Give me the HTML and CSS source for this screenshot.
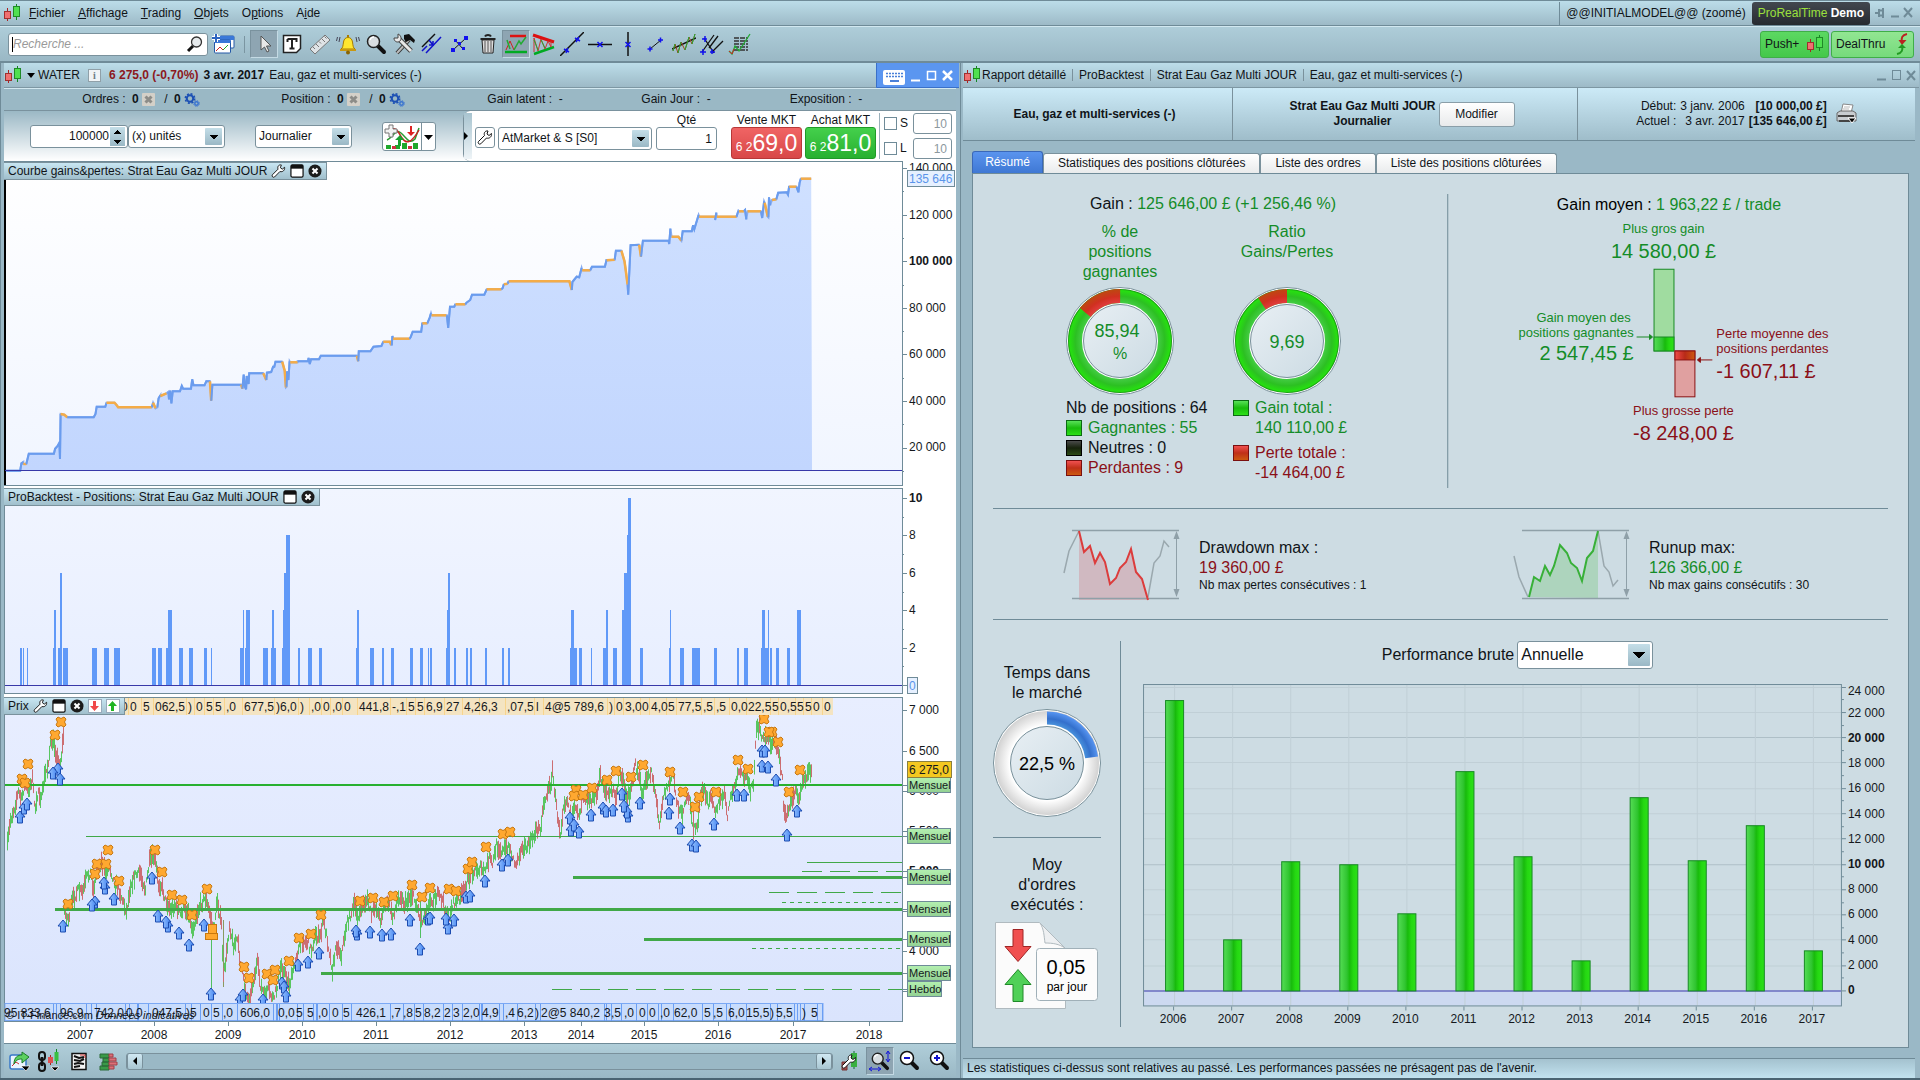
FILE: index.html
```html
<!DOCTYPE html>
<html lang="fr">
<head>
<meta charset="utf-8">
<title>ProRealTime</title>
<link rel="stylesheet" href="styles.css">
</head>
<body>
<svg width="0" height="0" class="defs" aria-hidden="true">
  <defs>
    <linearGradient id="gBar" x1="0" x2="1" y1="0" y2="0"><stop offset="0" stop-color="#55dd55"/><stop offset=".4" stop-color="#30c530"/><stop offset=".55" stop-color="#18bb0c"/><stop offset=".75" stop-color="#25d812"/><stop offset="1" stop-color="#2ce018"/></linearGradient>
    <linearGradient id="gRed" x1="0" x2="1" y1="0" y2="0"><stop offset="0" stop-color="#f04a4a"/><stop offset=".5" stop-color="#b82a18"/><stop offset="1" stop-color="#cc5a10"/></linearGradient>
    <linearGradient id="gPlot1" x1="0" x2="0" y1="0" y2="1"><stop offset="0" stop-color="#ffffff"/><stop offset="1" stop-color="#f0f5ff"/></linearGradient>
    <linearGradient id="gPlot2" x1="0" x2="0" y1="0" y2="1"><stop offset="0" stop-color="#f1f5ff"/><stop offset="1" stop-color="#e7eeff"/></linearGradient>
    <linearGradient id="gPlot3" x1="0" x2="0" y1="0" y2="1"><stop offset="0" stop-color="#e8eeff"/><stop offset="1" stop-color="#dae4fd"/></linearGradient>
    <linearGradient id="gArea" x1="0" x2="0" y1="0" y2="1"><stop offset="0" stop-color="#cfe0ff"/><stop offset="1" stop-color="#c2d6fe"/></linearGradient>
    <linearGradient id="gArrow" x1="0" x2="1" y1="0" y2="0"><stop offset="0" stop-color="#9cc8ff"/><stop offset="1" stop-color="#3f80f0"/></linearGradient>
    <linearGradient id="gTag" x1="0" x2="0" y1="0" y2="1"><stop offset="0" stop-color="#b4f0b0"/><stop offset="1" stop-color="#92d092"/></linearGradient>
    <radialGradient id="rGreen" gradientUnits="userSpaceOnUse" cx="54" cy="54" r="52"><stop offset=".73" stop-color="#44cc44"/><stop offset=".86" stop-color="#2cc022"/><stop offset=".97" stop-color="#26e010"/><stop offset="1" stop-color="#138a10"/></radialGradient>
    <radialGradient id="rRed" gradientUnits="userSpaceOnUse" cx="54" cy="54" r="52"><stop offset=".74" stop-color="#e03c3c"/><stop offset=".86" stop-color="#d03020"/><stop offset="1" stop-color="#bc4a10"/></radialGradient>
    <radialGradient id="rBlue" gradientUnits="userSpaceOnUse" cx="54" cy="54" r="52"><stop offset=".73" stop-color="#4a94dc"/><stop offset=".85" stop-color="#3470cc"/><stop offset="1" stop-color="#5a98f4"/></radialGradient>
    <radialGradient id="rWhite" gradientUnits="userSpaceOnUse" cx="54" cy="54" r="52"><stop offset=".72" stop-color="#ffffff"/><stop offset="1" stop-color="#d2d2d2"/></radialGradient>
    <linearGradient id="gHole" x1="0" x2="1" y1="0" y2="1"><stop offset="0" stop-color="#e8eff4"/><stop offset="1" stop-color="#ccdbe3"/></linearGradient>
    <symbol id="candles" viewBox="0 0 18 18"><path d="M4.500 4v13" stroke="#a22"/><rect x="1.500" y="7.500" width="6" height="7" fill="#f07070" stroke="#a03030"/><path d="M13.500 0v16" stroke="#182"/><rect x="10.500" y="2.500" width="6" height="10" fill="#50e050" stroke="#208a28"/></symbol>
    <symbol id="wrench" viewBox="0 0 16 16"><path d="M14.500 3.500l-2.500 2-2-1.500 1-3c-2.500-.5-4.500 1.500-3.500 4.500L1.500 11.500c-1.200 1.500.8 3.500 2.300 2.300L9.500 8c3 1 5.500-1.500 5-4.500z" fill="#fff" stroke="#111"/></symbol>
    <symbol id="winbox" viewBox="0 0 15 15"><rect x="1" y="1" width="13" height="13" rx="1.500" fill="#fff" stroke="#111" stroke-width="1.300"/><path d="M1 1h13v4H1z" fill="#111"/></symbol>
    <symbol id="closeball" viewBox="0 0 15 15"><circle cx="7.500" cy="7.500" r="7" fill="#1c1c1c"/><path d="M4.800 4.800l5.400 5.400M10.200 4.800l-5.400 5.400" stroke="#fff" stroke-width="2.200"/></symbol>
    <symbol id="delbox" viewBox="0 0 13 13"><rect width="13" height="13" rx="1" fill="#d4d0c8"/><path d="M3.500 3.500l6 6M9.500 3.500l-6 6" stroke="#8c8c88" stroke-width="3"/></symbol>
    <symbol id="gears" viewBox="0 0 16 14"><circle cx="6" cy="5.500" r="3.200" fill="none" stroke="#1c50b4" stroke-width="2"/><circle cx="6" cy="5.500" r="4.700" fill="none" stroke="#1c50b4" stroke-width="1.500" stroke-dasharray="2 1.690"/><circle cx="12.500" cy="10.500" r="1.700" fill="none" stroke="#3a74d0" stroke-width="1.500"/><circle cx="12.500" cy="10.500" r="2.800" fill="none" stroke="#3a74d0" stroke-dasharray="1.300 .9"/></symbol>
    <symbol id="lens" viewBox="0 0 22 22"><path d="M13 13l6 6" stroke="#111" stroke-width="4" stroke-linecap="round"/><circle cx="8.500" cy="8.500" r="6" fill="#d8dde0" stroke="#222" stroke-width="1.500"/><path d="M5 7a4 4 0 0 1 4-3" stroke="#fff" stroke-width="1.500" fill="none"/></symbol>
  </defs>
</svg>

<header class="menubar">
  <svg class="i18"><use href="#candles"/></svg>
  <nav class="menus">
    <a href="#"><u>F</u>ichier</a><a href="#"><u>A</u>ffichage</a><a href="#"><u>T</u>rading</a><a href="#"><u>O</u>bjets</a><a href="#">O<u>p</u>tions</a><a href="#">A<u>i</u>de</a>
  </nav>
  <span class="model">@@INITIALMODEL@@ (zoomé)</span>
  <span class="brand"><em>ProRealTime</em> <b>Demo</b></span>
  <svg class="wctl" width="46" height="18" fill="none" stroke="#6f8b98"><path d="M5 9h4M9 5v8M9 6.500h4v5H9M13 4v10" stroke-width="2"/><path d="M21 12.500h8M34 4l8 9M42 4l-8 9" stroke-width="2"/></svg>
</header>

<div class="toolbar">
  <label class="search"><input type="text" placeholder="Recherche ..." aria-label="Recherche"><svg width="18" height="18"><path d="M7 11L2 16" stroke="#111" stroke-width="3"/><circle cx="10.500" cy="7" r="5" fill="#e6eaec" stroke="#333" stroke-width="1.300"/></svg></label>
  <button class="plain" aria-label="Nouvelle fenêtre"><svg width="24" height="22"><rect x="9" y="3" width="14" height="12" rx="1" fill="#fff" stroke="#2458a8"/><path d="M9 3h14v4H9z" fill="#3a78d8"/><rect x="3.500" y="7" width="16" height="13" rx="1" fill="#fff" stroke="#2458a8"/><path d="M3.500 7h16v3h-16z" fill="#3a78d8"/><path d="M5 18l4-4 3 3" stroke="#c22" fill="none"/><path d="M12 17l5-5" stroke="#2a2" fill="none"/><path d="M5 1v8M1 5h8" stroke="#fff" stroke-width="4"/><path d="M5 1v8M1 5h8" stroke="#2c64c0" stroke-width="2"/></svg></button>
  <div class="tools">
    <button class="on" aria-label="Curseur"><svg width="24" height="24"><path d="M9 4v14l3.500-3 2.500 5 2-1-2.500-5H19z" fill="#e8e8e8" stroke="#555"/></svg></button>
    <button aria-label="Texte"><svg width="24" height="24"><path d="M3.500 3.500h17v13l-4 4h-13z" fill="#fff" stroke="#222" stroke-width="1.500"/><path d="M7.500 7h9v3M7.500 7v3M12 7v9M9.500 16.500h5" stroke="#222" stroke-width="2" fill="none"/></svg></button>
    <button aria-label="Règle"><svg width="24" height="24"><path d="M2 17L17 3l5 5L7 22z" fill="#dfe3e6" stroke="#777"/><path d="M5 15l2 2M8 12l3 3M11 9.500l2 2M14 7l3 3M16.500 4.500l2 2" stroke="#777"/></svg></button>
    <button aria-label="Alerte"><svg width="24" height="24"><path d="M5 17c2-1 2-4 2.500-7 .5-3 2-4.500 4.500-4.500s4 1.500 4.500 4.500 .5 6 2.500 7z" fill="#ffe630" stroke="#a87c00"/><path d="M4 18h16" stroke="#c89810" stroke-width="2"/><circle cx="12" cy="20.500" r="2" fill="#8a6400"/><path d="M12 3v2" stroke="#a87c00" stroke-width="2"/><path d="M4 5L3 10M1.500 5l-1 4M20 5l1 5M22.500 5l1 4" stroke="#445"/></svg></button>
    <button aria-label="Loupe"><svg width="24" height="24"><use href="#lens" x="1" y="1" width="22" height="22"/></svg></button>
    <button aria-label="Outils"><svg width="24" height="24"><path d="M5 21L17 8" stroke="#333" stroke-width="4"/><path d="M5 21L17 8" stroke="#bbb" stroke-width="2"/><path d="M12 3l5-1 6 6-1 3-4-3-4 2-2-3z" fill="#111"/><path d="M7 7l12 12" stroke="#444" stroke-width="5"/><path d="M6 6l13 13" stroke="#e8e8e8" stroke-width="3"/><path d="M2 6c0 4 4 5 6 3s1-6-2-7v4H2z" fill="#e8e8e8" stroke="#444"/></svg></button>
    <button aria-label="Canal"><svg width="24" height="24"><path d="M2 15L15 2" stroke="#111" stroke-width="1.500"/><path d="M6 21L21 5M2 19l5-5" stroke="#11c" stroke-width="1.500"/><path d="M9 8l4 5m0-4v4h-4" stroke="#11c" fill="none" stroke-width="1.500"/></svg></button>
    <button aria-label="Segment"><svg width="24" height="24"><path d="M5 18L18 6M7 8l8 9" stroke="#111"/><path d="M3 16h4v4H3zM16 4h4v4h-4zM6 7h3v3H6zM14 15h3v3h-3zM10 10h3v3h-3z" fill="#11e"/></svg></button>
    <button aria-label="Supprimer"><svg width="24" height="24"><path d="M6 8h12l-1 13H7z" fill="#ddd" stroke="#222"/><path d="M9 9v11M12 9v11M15 9v11" stroke="#555"/><path d="M4.500 7h15M9 4.500c1-2 5-2 6 0" stroke="#222" stroke-width="2" fill="none"/></svg></button>
    <button class="on" aria-label="Support et résistance"><svg width="24" height="24"><path d="M6 4h16" stroke="#d11" stroke-width="2.500"/><path d="M1 20h22" stroke="#0a2" stroke-width="2.500"/><path d="M2 18l4-9 4 9" stroke="#c22" fill="none"/><path d="M3 8l3 9M10 18l5-9 2 3 5-7" stroke="#2a3" stroke-width="1.500" fill="none"/></svg></button>
    <button aria-label="Triangle"><svg width="24" height="24"><path d="M1 3l21 7" stroke="#d11" stroke-width="3"/><path d="M2 22l20-7" stroke="#0a2" stroke-width="2.500"/><path d="M2 20V6l4 13 3-12 4 10 3-8 3 6V9" stroke="#c33" fill="none"/><path d="M2 8l4 10M9 8l4 8" stroke="#2a3" fill="none"/></svg></button>
    <button aria-label="Droite"><svg width="24" height="24"><path d="M0 24L24 0" stroke="#111" stroke-width="1.500"/><path d="M4 17l5 3M8 16l-2 5M15 6l5 3M19 5l-3 5" stroke="#11e" stroke-width="1.500"/></svg></button>
    <button aria-label="Horizontale"><svg width="24" height="24"><path d="M0 12.500h24" stroke="#111" stroke-width="1.500"/><path d="M9.500 10l5 5M14.500 10l-5 5" stroke="#11e" stroke-width="1.500"/></svg></button>
    <button aria-label="Verticale"><svg width="24" height="24"><path d="M12 0v24" stroke="#111" stroke-width="1.500"/><path d="M9.500 10l5 5M14.500 10l-5 5" stroke="#11e" stroke-width="1.500"/></svg></button>
    <button aria-label="Segment simple"><svg width="24" height="24"><path d="M6 17L17 8" stroke="#111"/><path d="M3.500 17h5M6 14.500v5M14 8h5M16.500 5.500v5" stroke="#11e" stroke-width="1.500"/></svg></button>
    <button aria-label="Régression"><svg width="24" height="24"><path d="M0 17L24 6" stroke="#111" stroke-width="1.500"/><path d="M1 19l2-7 3 9 3-11 4 8 4-13 3 7 3-10" stroke="#994818" fill="none"/><path d="M1 19l2-7M6 21l3-11M13 18l4-13M20 12l3-10" stroke="#2a3"/></svg></button>
    <button aria-label="Fourchette"><svg width="24" height="24"><path d="M2 20L14 3M9 16l9-12M12 20L23 9M4 6l10 15" stroke="#111" stroke-width="1.300"/><path d="M0 20h6M3 17v6M2 7h5M5 4v6M10 20h5M12 17v5" stroke="#11e" stroke-width="1.500"/></svg></button>
    <button aria-label="Fibonacci"><svg width="24" height="24"><path d="M6 6h14M6 9h14M6 12h14M6 15h14M6 18h14" stroke="#333" stroke-dasharray="5 1" stroke-width="1.600"/><path d="M1 19l3 3 3-8 4 5L22 2" stroke="#2a3" stroke-width="1.300" fill="none"/><path d="M1 19l3 3 2-5" stroke="#c22" fill="none"/></svg></button>
  </div>
  <button class="push">Push+ <svg class="i18"><use href="#candles"/></svg></button>
  <button class="deal">DealThru <svg width="14" height="22"><path d="M12 1C7 2 6 5 7 9" stroke="#b22" stroke-width="2" fill="none"/><path d="M3.500 7h8L7 12z" fill="#b22"/><path d="M2 21c5-1 6-4 5-8" stroke="#292" stroke-width="2" fill="none"/><path d="M3 15h8l-4-4z" fill="#292"/></svg></button>
</div>

<main class="desk">
  <section class="win">
    <div class="title">
      <svg class="i18"><use href="#candles"/></svg><i class="tri"></i>
      <span>WATER</span><span class="info">i</span>
      <b class="loss">6 275,0 (-0,70%)</b><b>3 avr. 2017</b><span>Eau, gaz et multi-services (-)</span>
      <svg class="kbd" width="83" height="25"><path d="M0 0h83v25H0z" fill="#5b96f0"/><path d="M.5 0v24.500H83" stroke="#3a70c8" fill="none"/><rect x="7" y="7" width="22" height="15" rx="2" fill="#fff"/><path d="M10 10.500h17M10 13.500h17" stroke="#4a80d8" stroke-width="1.500" stroke-dasharray="2 1"/><path d="M14 18h9" stroke="#4a80d8" stroke-width="2"/><path d="M35 17.500h9" stroke="#fff" stroke-width="2"/><rect x="51.500" y="8.500" width="8" height="8" fill="none" stroke="#fff" stroke-width="1.500"/><path d="M67 8l9 9M76 8l-9 9" stroke="#fff" stroke-width="2.500"/></svg>
    </div>
    <div class="orders">
      <span>Ordres : <b>0</b> <svg width="13" height="13"><use href="#delbox"/></svg> &nbsp;/ <b>0</b><svg width="16" height="14"><use href="#gears"/></svg></span>
      <span>Position : <b>0</b> <svg width="13" height="13"><use href="#delbox"/></svg> &nbsp;/ <b>0</b><svg width="16" height="14"><use href="#gears"/></svg></span>
      <span>Gain latent :&nbsp; -</span><span>Gain Jour :&nbsp; -</span><span>Exposition :&nbsp; -</span>
    </div>
    <div class="trade">
      <div class="setup">
        <label class="field qty"><input type="text" value="100000" aria-label="Quantité d'unités"><i class="spin"></i></label>
        <label class="field drop units"><select aria-label="Unités"><option>(x) unités</option></select></label>
        <label class="field drop period"><select aria-label="Période"><option>Journalier</option></select></label>
        <button class="indic" aria-label="Indicateurs"><svg width="52" height="27"><path d="M38.500 0v27" stroke="#7a919c"/><path d="M4 17c6-2 8-12 14-7s8 12 14 6l4-11" stroke="#2a9a30" stroke-width="1.500" fill="none"/><path d="M6 7c8-4 9 2 13 8s9 6 17-8" stroke="#c22" stroke-width="1.500" fill="none"/><path d="M3 26v-4h5v4zM12 26v-4h5v4zM19 26v-6h5v6zM30 26v-6h5v6z" fill="#1ea82c"/><path d="M9 26v-3h4v3zM25 26v-3h4v3z" fill="#d03040"/><path d="M15 23v-6h-3l5-5 4 5h-3v6z" fill="#19a030"/><path d="M27 3v6h-3l4 4 4-4h-3V3z" fill="#d22"/><path d="M6 2h4v4h4v4h-4v4H6v-4H2V6h4z" fill="#f2f2f2" stroke="#777"/><path d="M41 12h9l-4.500 5z" fill="#000"/></svg></button>
      </div>
      <div class="deskpanel">
        <i class="expand"></i>
        <button class="tool" aria-label="Réglages"><svg width="16" height="16"><use href="#wrench"/></svg></button>
        <label class="field drop market"><select aria-label="Type d'ordre"><option>AtMarket &amp; S [S0]</option></select></label>
        <label class="col">Qté<input class="field one" type="text" value="1"></label>
        <div class="col"><span>Vente MKT</span><button class="px sell"><small>6 2</small>69,0</button></div>
        <div class="col"><span>Achat MKT</span><button class="px buy"><small>6 2</small>81,0</button></div>
        <div class="sl">
          <label><input type="checkbox"><span>S</span></label><input class="field ten" type="text" value="10" aria-label="Stop">
          <label><input type="checkbox"><span>L</span></label><input class="field ten" type="text" value="10" aria-label="Limite">
        </div>
      </div>
    </div>
    <div class="charts">
      <div class="chart"><h2>Courbe gains&amp;pertes: Strat Eau Gaz Multi JOUR <svg width="15" height="15"><use href="#wrench"/></svg><svg width="14" height="14"><use href="#winbox"/></svg><svg width="14" height="14"><use href="#closeball"/></svg></h2><svg id="equity" viewBox="4 161 952 326"></svg></div>
      <div class="chart"><h2>ProBacktest - Positions: Strat Eau Gaz Multi JOUR <svg width="14" height="14"><use href="#winbox"/></svg><svg width="14" height="14"><use href="#closeball"/></svg></h2><svg id="positions" viewBox="4 487 952 209"></svg></div>
      <div class="chart"><h2>Prix <svg width="15" height="15"><use href="#wrench"/></svg><svg width="14" height="14"><use href="#winbox"/></svg><svg width="14" height="14"><use href="#closeball"/></svg><svg width="14" height="14"><rect x=".5" y=".5" width="13" height="13" fill="#fff" stroke="#9ab"/><path d="M5 2h3v5h3l-4.500 5L2 7h3z" fill="#f04848"/></svg><svg width="14" height="14"><rect x=".5" y=".5" width="13" height="13" fill="#fff" stroke="#9ab"/><path d="M5 12h3V7h3L6.500 2 2 7h3z" fill="#22b422"/></svg></h2><svg id="price" viewBox="4 696 952 347"></svg></div>
    </div>
    <div class="bottom">
      <button aria-label="Exporter"><svg width="22" height="22"><rect x="2" y="5" width="16" height="14" rx="2" fill="#eaf4ff" stroke="#3878c8" stroke-width="1.500"/><path d="M4 16l4-4 3 2" stroke="#c33" fill="none"/><path d="M6 14c0-7 4-9 8-9V2l7 5-7 6V9c-4 0-6 1-8 5z" fill="#5cd060" stroke="#1c7c28"/><path d="M13 16h9l-4 5z" fill="#000" stroke="#fff" stroke-width=".7"/></svg></button>
      <button aria-label="Lier"><svg width="26" height="24"><rect x="3" y="3" width="6" height="8" rx="3" fill="none" stroke="#111" stroke-width="2"/><rect x="3" y="14" width="6" height="8" rx="3" fill="none" stroke="#111" stroke-width="2"/><path d="M6 8v9" stroke="#111" stroke-width="2.500"/><path d="M14.500 6v10" stroke="#a22"/><path d="M12 8h5v6h-5z" fill="#e05050"/><path d="M20.500 0v15" stroke="#182"/><path d="M18.500 3h4v9h-4z" fill="#38c040"/><path d="M15 18h8l-4 4z" fill="#000" stroke="#fff" stroke-width=".7"/></svg></button>
      <button aria-label="Liste"><svg width="22" height="22"><rect x="4" y="3.500" width="14" height="16" fill="#f4f4f4" stroke="#111" stroke-width="1.500"/><path d="M6 6l5 2 5-1M6 10l6 1 4-2M6 14l4-1 6 1M6 17l6-1" stroke="#111" stroke-width="2" fill="none"/><path d="M12 5h5v3" stroke="#c33" fill="none"/></svg></button>
      <button aria-label="Carnet"><svg width="22" height="22"><path d="M2 4h9v4H2zM5 8h6v4H5zM4 12h7v4H4zM2 16h9v4H2z" fill="#3a9a48" stroke="#2a6a38"/><path d="M11 4h4v3h-4zM11 8h7v3h-7zM11 12h8v3h-8zM11 16h5v3h-5z" fill="#dc7078" stroke="#a04048"/></svg></button>
      <div class="scroll"><button aria-label="Gauche"><svg width="6" height="8"><path d="M5 0v8L1 4z"/></svg></button><i></i><button aria-label="Droite"><svg width="6" height="8"><path d="M1 0v8l4-4z"/></svg></button></div>
      <button aria-label="Réglages du graphique"><svg width="22" height="24"><path d="M3 13h5v8H3z" fill="#a04a48" stroke="#733"/><path d="M15 2v18" stroke="#163"/><path d="M12 4h6v14h-6z" fill="#38b040"/><use href="#wrench" x="2" y="5" width="16" height="16"/></svg></button>
      <button class="on" aria-label="Zoom libre"><svg width="24" height="24"><use href="#lens" x="2" y="2" width="20" height="20"/><path d="M20 3v9M18 5l2-3 2 3M18 10l2 3 2-3M2 20h10M4 18l-3 2 3 2M10 18l3 2-3 2" stroke="#11d" fill="none"/></svg></button>
      <button aria-label="Zoom arrière"><svg width="24" height="24"><path d="M13 13l6 6" stroke="#111" stroke-width="4" stroke-linecap="round"/><circle cx="9" cy="9" r="6.500" fill="#fff" stroke="#111" stroke-width="1.500"/><path d="M6 9h6" stroke="#11c" stroke-width="2"/></svg></button>
      <button aria-label="Zoom avant"><svg width="24" height="24"><path d="M13 13l6 6" stroke="#111" stroke-width="4" stroke-linecap="round"/><circle cx="9" cy="9" r="6.500" fill="#fff" stroke="#111" stroke-width="1.500"/><path d="M6 9h6M9 6v6" stroke="#11c" stroke-width="2"/></svg></button>
    </div>
  </section>

  <section class="win report">
    <div class="title">
      <svg class="i18"><use href="#candles"/></svg>
      <span class="crumb">Rapport détaillé</span><span class="crumb">ProBacktest</span><span class="crumb">Strat Eau Gaz Multi JOUR</span><span class="crumb">Eau, gaz et multi-services (-)</span>
      <svg class="wctl" width="46" height="18" fill="none" stroke="#6f8b98"><path d="M1 13.500h9" stroke-width="2"/><rect x="16.500" y="4.500" width="8" height="9"/><path d="M31 5l8 9M39 5l-8 9" stroke-width="2"/></svg>
    </div>
    <div class="head">
      <div><b>Eau, gaz et multi-services (-)</b></div>
      <div><b>Strat Eau Gaz Multi JOUR<br>Journalier</b><button class="modify">Modifier</button></div>
      <div><table><tr><td>Début:</td><td>3 janv. 2006</td><td><b>[10 000,00 £]</b></td></tr><tr><td>Actuel :</td><td>3 avr. 2017</td><td><b>[135 646,00 £]</b></td></tr></table>
        <button class="plain" aria-label="Imprimer"><svg width="22" height="22"><path d="M7 1l10 1-2 8H5z" fill="#fff" stroke="#888"/><path d="M8 4h6M7 6h6" stroke="#bbb"/><path d="M1 10l3-2h13l3 2v8H1z" fill="#c8ccd0" stroke="#666"/><path d="M2 13h16M3 18h14" stroke="#444" stroke-width="2"/><path d="M12 15h8l-4 5z" fill="#000" stroke="#fff"/></svg></button></div>
    </div>
    <div class="tabs"><button class="sel">Résumé</button><button>Statistiques des positions clôturées</button><button>Liste des ordres</button><button>Liste des positions clôturées</button></div>
    <div class="panel">
      <div class="row gains">
        <div class="left">
          <h3>Gain : <span class="g">125 646,00 £ (+1 256,46 %)</span></h3>
          <div class="pair">
            <div>
              <p class="cap g">% de<br>positions<br>gagnantes</p>
              <svg class="donut" viewBox="0 0 108 108"><circle cx="54" cy="54" r="53.500" fill="#fff" stroke="#78909a"/><circle cx="54" cy="54" r="45" fill="none" stroke="url(#rGreen)" stroke-width="14"/><circle cx="54" cy="54" r="45" fill="none" stroke="url(#rRed)" stroke-width="14" pathLength="1000" stroke-dasharray="141 859" transform="rotate(219.400 54 54)"/><circle cx="54" cy="54" r="36.500" fill="url(#gHole)" stroke="#78909a"/><text x="51" y="50" class="t18 g">85,94</text><text x="54" y="72" class="t16 g">%</text></svg>
              <ul><li>Nb de positions : 64</li><li class="g"><i class="sw sg"></i>Gagnantes : 55</li><li><i class="sw sk"></i>Neutres : 0</li><li class="r"><i class="sw sr"></i>Perdantes : 9</li></ul>
            </div>
            <div>
              <p class="cap g">Ratio<br>Gains/Pertes</p>
              <svg class="donut" viewBox="0 0 108 108"><circle cx="54" cy="54" r="53.500" fill="#fff" stroke="#78909a"/><circle cx="54" cy="54" r="45" fill="none" stroke="url(#rGreen)" stroke-width="14"/><circle cx="54" cy="54" r="45" fill="none" stroke="url(#rRed)" stroke-width="14" pathLength="1000" stroke-dasharray="94 906" transform="rotate(236.200 54 54)"/><circle cx="54" cy="54" r="36.500" fill="url(#gHole)" stroke="#78909a"/><text x="54" y="61" class="t18 g">9,69</text></svg>
              <ul class="totals"><li class="g"><i class="sw sg"></i><span>Gain total :<br>140 110,00 £</span></li><li class="r"><i class="sw sr"></i><span>Perte totale :<br>-14 464,00 £</span></li></ul>
            </div>
          </div>
        </div>
        <svg class="avg" viewBox="1446 193 441 295">
          <path d="M1446.500 193v295" stroke="#6f8b98"/>
          <text x="1556" y="209" class="t16s">Gain moyen : <tspan class="g">1 963,22 £ / trade</tspan></text>
          <text x="1663" y="232" class="t13 g">Plus gros gain</text><text x="1663" y="257" class="t20 g">14 580,00 £</text>
          <g stroke="#188a24"><rect x="1653.500" y="268.500" width="20" height="82" fill="#a0dca0"/><rect x="1653.500" y="336.500" width="20" height="14" fill="url(#gBar)"/><path d="M1636 336.500h14" fill="none"/><path d="M1649 334v5l3-2.500z" fill="#188a24"/></g>
          <g stroke="#8a1010"><rect x="1674.500" y="350.500" width="20" height="46" fill="#e0a0a0"/><rect x="1674.500" y="350.500" width="20" height="9" fill="url(#gRed)"/><path d="M1698 359.500h14" fill="none"/><path d="M1700 357v5l-3-2.500z" fill="#8a1010"/></g>
          <text x="1630" y="321" class="t13 g end">Gain moyen des</text><text x="1633" y="336" class="t13 g end">positions gagnantes</text><text x="1633" y="360" class="t20 g end">2 547,45 £</text>
          <text x="1716" y="338" class="t13 r st">Perte moyenne des</text><text x="1716" y="353" class="t13 r st">positions perdantes</text><text x="1716" y="378" class="t20 r st">-1 607,11 £</text>
          <text x="1683" y="415" class="t13 r">Plus grosse perte</text><text x="1683" y="440" class="t20 r">-8 248,00 £</text>
        </svg>
      </div>
      <div class="row extremes">
        <div><svg width="118" height="73"><path d="M16 3l5 21 6-6 5 17 5-10 5 9 5 22 6-6 4-10 6-6 5-13 5 23 6 7 6 21H16z" fill="#d87078" opacity=".32"/><path d="M9 2.500h107M9 70.500h107" stroke="#8fa0a8" stroke-width="1.500"/><path d="M1 45l5-22L16 3M85 69l6-34 6-7 4-15 5 6" stroke="#9aa8ae" stroke-width="1.500" fill="none"/><path d="M16 3l5 21 6-6 5 17 5-10 5 9 5 22 6-6 4-10 6-6 5-13 5 23 6 7 6 21" stroke="#dc3c3c" stroke-width="2" fill="none"/><path d="M113.500 4v64" stroke="#8fa0a8"/><path d="M113.500 3l3 8h-6zM113.500 69l3-8h-6z" fill="#8fa0a8"/></svg>
          <p>Drawdown max :<br><span class="r">19 360,00 £</span><small>Nb max pertes consécutives : 1</small></p></div>
        <div><svg width="118" height="73"><path d="M16 69l5-20 6 4 5-15 5 9 4-9 6-21 7 8 4 10 6 5 5 13 5-23 6-7 5-20v67z" fill="#78c880" opacity=".38"/><path d="M9 2.500h107M9 70.500h107" stroke="#8fa0a8" stroke-width="1.500"/><path d="M1 28l5 21 9 20M85 3l6 35 5 6 4 14 5-6" stroke="#9aa8ae" stroke-width="1.500" fill="none"/><path d="M16 69l5-20 6 4 5-15 5 9 4-9 6-21 7 8 4 10 6 5 5 13 5-23 6-7 5-20" stroke="#38b038" stroke-width="2" fill="none"/><path d="M113.500 4v64" stroke="#8fa0a8"/><path d="M113.500 3l3 8h-6zM113.500 69l3-8h-6z" fill="#8fa0a8"/></svg>
          <p>Runup max:<br><span class="g">126 366,00 £</span><small>Nb max gains consécutifs : 30</small></p></div>
      </div>
      <div class="row perf">
        <div class="side">
          <p>Temps dans<br>le marché</p>
          <svg class="donut" viewBox="0 0 108 108"><circle cx="54" cy="54" r="53.500" fill="#fff" stroke="#78909a"/><circle cx="54" cy="54" r="45" fill="none" stroke="url(#rWhite)" stroke-width="14"/><circle cx="54" cy="54" r="45" fill="none" stroke="url(#rBlue)" stroke-width="13" pathLength="1000" stroke-dasharray="230 770" transform="rotate(-90 54 54)"/><circle cx="54" cy="54" r="36.500" fill="url(#gHole)" stroke="#78909a"/><text x="54" y="61" class="t18">22,5 %</text></svg>
          <hr>
          <p>Moy<br>d'ordres<br>exécutés :</p>
          <svg viewBox="0 0 108 90" class="orderpic"><path d="M2.500 1.500h44l26 26v60h-70z" fill="#fbfbfb" stroke="#b0babf"/><path d="M47 2c4 6 4 13 5 20 8 0 14 1 20 5z" fill="#eef0f2" stroke="#b0babf"/><path d="M20 8.500h10v17h8l-13 15-13-15h8z" fill="#f05050" stroke="#a02424"/><path d="M20 80.500h10v-17h8l-13-15-13 15h8z" fill="#50d058" stroke="#208a28"/><rect x="43.500" y="27.500" width="61" height="52" rx="3" fill="#fcfcfc" stroke="#a0b0b8"/><text x="73" y="53" class="t20">0,05</text><text x="74" y="70" class="t12">par jour</text></svg>
        </div>
        <div class="plot">
          <div class="pick"><label for="pb">Performance brute</label><span class="field drop big"><select id="pb"><option>Annuelle</option></select></span></div>
          <svg id="perf" viewBox="1121 669 766 357"></svg>
        </div>
      </div>
    </div>
    <footer>Les statistiques ci-dessus sont relatives au passé. Les performances passées ne présagent pas de l'avenir.</footer>
  </section>
</main>
<script src="charts.js"></script>
</body>
</html>
```
FILE: styles.css
```css
* { box-sizing: border-box; }
body { margin: 0; min-height: 100vh; display: flex; flex-direction: column; font: 12px/15px "Liberation Sans", Arial, sans-serif; color: #101418; background: #9ab8c6; }
.defs { position: absolute; }
button, input, select { font: inherit; color: inherit; margin: 0; }
button { cursor: pointer; }
h2, h3, p, ul { margin: 0; padding: 0; font-weight: normal; }
svg { display: block; flex: none; }
small { font-size: 12px; }
.i18 { width: 18px; height: 18px; }
.g { color: #148c28; fill: #148c28; }
.r { color: #8a1018; fill: #8a1018; }

.menubar { display: flex; align-items: center; height: 26px; padding: 0 4px 0 3px; border-top: 1px solid #6f8b98; border-bottom: 1px solid #6f8b98; background: linear-gradient(#bcdde9, #9dbac7); }
.menus { display: flex; gap: 13px; margin-left: 8px; flex: 1; }
.menus a { color: inherit; text-decoration: none; }
.model { border-left: 1px solid #6f8b98; padding: 4px 6px; }
.brand { background: linear-gradient(#42474f, #262a30); color: #fff; border-radius: 3px; padding: 4px 6px; }
.brand em { font-style: normal; color: #9be03c; }

.toolbar { display: flex; align-items: center; height: 37px; padding: 0 6px 0 8px; border-top: 1px solid #d2e8f0; border-bottom: 2px solid #6f8b98; background: linear-gradient(#aecdd9, #9ab8c5); }
.search { display: flex; align-items: center; width: 200px; height: 23px; background: #fff; border: 1px solid #7a919c; border-radius: 3px; padding: 0 3px; }
.search input { flex: 1; min-width: 0; border: 0; outline: 0; padding: 0; background: none; border-left: 1px solid #000; }
.search input::placeholder { color: #9a9a9a; font-style: italic; }
button.plain, .tools button, .bottom > button { display: grid; place-items: center; border: 1px solid transparent; background: none; padding: 0; }
.toolbar .plain { width: 28px; margin: 0 7px 0 1px; }
.tools { display: flex; flex: 1; padding-left: 6px; background: linear-gradient(#7a95a1, #7a95a1) 0 50% / 1px 17px no-repeat; }
.tools button { width: 28px; height: 28px; }
.tools .on, .bottom .on { background: #8ea5b2; border-color: #7a929e #c4dae4 #c4dae4 #7a929e; }
.push, .deal { display: flex; align-items: center; justify-content: space-between; height: 27px; padding: 0 4px; border: 1px solid #3fae48; border-radius: 3px; background: linear-gradient(#5cd862, #44c84a); }
.push { width: 69px; margin-right: 2px; }
.deal { width: 83px; background: linear-gradient(#92e692, #76da7c); }

.desk { flex: 1; display: grid; grid-template-columns: 1fr 1fr; border-bottom: 2px solid #4a6472; }
.win { display: flex; flex-direction: column; min-width: 0; padding: 0 4px 0 3px; border-left: 1px solid #6f8b98; }
.title { display: flex; align-items: center; gap: 5px; height: 25px; background: linear-gradient(#bcdde9, #9dbac7); border-bottom: 1px solid #7d97a3; }
.title .kbd, .title .wctl { margin-left: auto; margin-right: -3px; }
.tri { width: 0; border: 4px solid transparent; border-top: 5px solid #000; border-bottom: 0; margin-right: -2px; }
.info { width: 13px; height: 13px; margin: 0 3px; background: #f0f4f6; border: 1px solid #90a0a8; font: bold 10px/11px "Liberation Serif", serif; text-align: center; color: #6c7c84; }
.loss { color: #8c1820; }
.orders { display: grid; grid-template-columns: 194px 210px 154px 148px 152px; padding-left: 40px; height: 23px; align-items: center; border-top: 1px solid #d2e8f0; border-bottom: 1px solid #7a929e; background: #9ab8c5; }
.orders span { display: flex; align-items: center; justify-content: center; gap: 3px; white-space: pre; }
.trade { display: flex; height: 50px; background: linear-gradient(#9bb8c5, #fff); }
.setup { display: flex; align-items: center; flex: 1; padding-left: 26px; }
.field { display: flex; align-items: center; height: 23px; background: #fff; border: 1px solid #7a919c; border-radius: 3px; padding: 0 4px; }
.field input, .field select { flex: 1; min-width: 0; width: 100%; border: 0; outline: 0; padding: 0; background: none; appearance: none; }
.qty { width: 98px; padding-right: 2px; }
.qty input { text-align: right; }
.spin { width: 15px; height: 19px; margin-left: 1px; background: conic-gradient(from 135deg at 50% 0, #000 90deg, transparent 0) 4px 3px / 7px 4px no-repeat, conic-gradient(from -45deg at 50% 4px, #000 90deg, transparent 0) 4px 13px / 7px 4px no-repeat, linear-gradient(#c4dee8, #9ab8c5); }
.drop { padding: 0 2px 0 3px; }
.drop::after { content: ""; width: 17px; height: 17px; background: conic-gradient(from -45deg at 50% 4px, #000 90deg, transparent 0) 5px 7px / 8px 4px no-repeat, linear-gradient(#c4dee8, #9ab8c5); border-radius: 1px; pointer-events: none; }
.units { width: 97px; }
.period { width: 97px; margin-left: 30px; }
.indic { height: 29px; width: 54px; margin-left: 30px; padding: 0; border: 1px solid #7a919c; border-radius: 3px; background: #fff; }
.deskpanel { display: flex; align-items: flex-start; gap: 3px; width: 493px; height: 50px; background: #fff; border-left: 1px solid #7a919c; border-radius: 7px 0 0 7px; padding-top: 2px; }
.deskpanel > .tool, .deskpanel > .market { margin-top: 14px; }
.expand { width: 8px; height: 46px; background: linear-gradient(#a8c4d0, #eef4f7); }
.expand::after { content: ""; display: block; margin-top: 19px; border: 4px solid transparent; border-left: 4px solid #000; border-right: 0; width: 4px; }
.tool { width: 20px; height: 21px; padding: 1px; border: 1px solid #7a919c; border-radius: 3px; background: #fff; }
.market { width: 154px; }
.col { display: flex; flex-direction: column; align-items: center; line-height: 14px; }
.deskpanel label.col { margin: 0 11px 0 1px; }
.one { width: 61px; text-align: right; }
.px { display: flex; align-items: baseline; justify-content: center; width: 71px; height: 32px; border: 1px solid #b83838; border-radius: 3px; color: #fff; font-size: 23px; line-height: 30px; padding: 0; background: linear-gradient(#f06464, #d84848); }
.px small { font-size: 12px; }
.buy { border-color: #1f9a28; background: linear-gradient(#44d04c, #28b030); }
.sl { display: grid; grid-template-columns: 25px 39px; gap: 4px; border-left: 1px solid #9ab0ba; padding-left: 4px; }
.sl label { display: flex; align-items: center; gap: 3px; }
.sl input[type=checkbox] { appearance: none; flex: none; width: 13px; height: 13px; border: 1px solid #6f8b98; background: #fff; }
.ten { width: 39px; height: 21px; text-align: right; color: #8c989e; }

.charts { background: #fff; }
.chart { position: relative; }
.chart > svg { width: 100%; height: auto; overflow: hidden; }
.chart h2 { position: absolute; left: 0; top: 1px; display: flex; align-items: center; gap: 4px; height: 18px; padding: 0 4px; font-size: 12px; white-space: nowrap; border: 1px solid #7a919c; border-left: 0; background: linear-gradient(#c8e6f2, #a0bfcc); }
.tick { font-size: 12px; fill: #14181c; }
.tag { font-size: 11px; }
.blue { fill: #5a94ea; }
.b { font-weight: bold; }
.mid { text-anchor: middle; }

.bottom { display: flex; align-items: center; flex: 1; min-height: 34px; padding-left: 1px; border-top: 1px solid #6f8b98; background: linear-gradient(#b0ced9, #9ab8c5); }
.bottom > button { width: 28px; height: 28px; margin-right: 2px; }
.scroll { display: flex; flex: 1; height: 17px; margin: 0 3px 0 1px; border: 1px solid #7a919c; background: #9ab8c5; border-radius: 3px; }
.scroll i { flex: 1; }
.scroll button { display: grid; place-items: center; width: 16px; padding: 0; border: 0; border-right: 1px solid #7a919c; border-left: 1px solid #7a919c; background: linear-gradient(#d0e8f2, #a8c6d2); border-radius: 2px; }

.report { padding: 0 1px 0 2px; background: #9ab8c6; }
.report .title { gap: 0; }
.crumb { padding: 0 6px; border-right: 1px solid #7a919c; line-height: 12px; }
.crumb:nth-of-type(1) { padding-left: 1px; }
.crumb:last-of-type { border: 0; }
.head { display: grid; grid-template-columns: 270px 345px 1fr; height: 53px; background: linear-gradient(#cceaf7, #9fbdca); border-bottom: 1px solid #6f8b98; margin-right: 4px; }
.head > div { display: flex; align-items: center; justify-content: center; gap: 3px; border-right: 1px solid #7a919c; text-align: center; }
.head > div:first-child { padding-right: 6px; }
.head > div:nth-child(2) { padding-right: 6px; }
.head > div:last-child { border: 0; gap: 6px; }
.head td { padding: 0 2px; text-align: right; }
.head table { border-spacing: 0; }
.modify { width: 76px; height: 25px; padding: 0; border: 1px solid #8a9ea8; border-radius: 3px; background: linear-gradient(#fff, #e8eaeb); }
.tabs { display: flex; align-items: flex-end; padding: 10px 0 0 9px; height: 32px; }
.tabs button { height: 20px; padding: 0 14px; border: 1px solid #7a919c; border-bottom: 0; border-radius: 3px 3px 0 0; background: linear-gradient(#fff, #e9ebec); white-space: nowrap; }
.tabs .sel { height: 22px; width: 71px; padding: 0; color: #fff; background: linear-gradient(#5a94ee, #3f78d4); border-color: #3a68b8; }
.panel { flex: 1; display: flex; flex-direction: column; margin: 0 10px 10px 9px; padding: 0 20px; border: 1px solid #6f8b98; background: #cddce3; font-size: 16px; line-height: 20px; }
.row { display: flex; border-bottom: 1px solid #6f8b98; }
.gains { height: 335px; padding: 20px 0; }
.left { flex: 0 0 453px; padding-left: 73px; }
.left h3 { width: 294px; font-size: 16px; line-height: 20px; text-align: center; white-space: nowrap; }
.pair { display: grid; grid-template-columns: 145px 127px; column-gap: 22px; margin-top: 8px; }
.cap { width: 108px; height: 60px; margin-bottom: 5px; text-align: center; }
.donut { width: 108px; height: 108px; }
.pair ul { list-style: none; margin-top: 3px; white-space: nowrap; }
.pair li { display: flex; gap: 6px; }
.totals li { margin-bottom: 5px; }
.sw { flex: none; width: 16px; height: 16px; margin-top: 2px; border: 1px solid #0c6a14; background: linear-gradient(#58e058, #18bb0c 50%, #2ce018); }
.sk { border-color: #000; background: linear-gradient(#4a4a4a, #16220c 50%, #2c4a14); }
.sr { border-color: #7a1010; background: linear-gradient(#f05050, #c03018 50%, #cc5a10); }
.avg { flex: 1; min-width: 0; height: auto; }
.extremes { height: 111px; }
.extremes > div { flex: 0 0 450px; display: flex; align-items: center; gap: 18px; padding-left: 70px; }
.extremes > div + div { flex: 1; }
.extremes p { margin-top: 2px; white-space: nowrap; }
.extremes small { display: block; line-height: 15px; }
.perf { border: 0; flex: 1; padding: 21px 0 20px; }
.side { flex: 0 0 128px; padding: 22px 19px 0 0; border-right: 1px solid #6f8b98; text-align: center; }
.side .donut { margin-top: 6px; }
.side hr { border: 0; border-top: 1px solid #6f8b98; margin: 20px 0 17px; }
.orderpic { width: 108px; margin-top: 6px; }
.plot { flex: 1; min-width: 0; }
.plot > svg { width: 100%; height: auto; }
.pick { display: flex; align-items: center; justify-content: center; gap: 3px; height: 28px; padding-left: 26px; }
.big { width: 136px; height: 28px; }
.big::after { width: 22px; height: 22px; background: conic-gradient(from -45deg at 50% 6px, #000 90deg, transparent 0) 5px 8px / 12px 6px no-repeat, linear-gradient(#c4dee8, #9ab8c5); }
.report footer { height: 20px; line-height: 19px; padding-left: 4px; border-top: 1px solid #6f8b98; background: linear-gradient(#a4c2cf, #c2e2ef); margin: 0 4px 0 0; }

.t12 { font-size: 12px; text-anchor: middle; }
.t13 { font-size: 13px; text-anchor: middle; }
.t16 { font-size: 16px; text-anchor: middle; }
.t16s { font-size: 16px; }
.t18 { font-size: 18px; text-anchor: middle; }
.t20 { font-size: 20px; text-anchor: middle; }
.st { text-anchor: start; }
.end { text-anchor: end; }
.em { font-style: italic; }
```
FILE: charts.js
```js
// Chart drawing: equity curve, open positions, price and yearly performance.
const AX = '#6f8b98';
const line = (x1, y1, x2, y2, c = AX, w = 1, extra = '') => `<path d="M${x1} ${y1}L${x2} ${y2}" stroke="${c}" stroke-width="${w}" fill="none" ${extra}/>`;
const text = (x, y, s, cls = '') => `<text x="${x}" y="${y}" class="tick ${cls}">${s}</text>`;
const rect = (x, y, w, h, f, s = 'none') => `<rect x="${x}" y="${y}" width="${w}" height="${h}" fill="${f}" stroke="${s}"/>`;
const K = 960 / 1568;

// Equity curve: runs of "in gain" (b) and "flat / losing" (o) points.
const curve = `b 10,932 33,932 35,910 38,906;o 38,912 43,912;b 43,912 47,881 88,881 90,866 94,858 97,848 98,897 99,762;o 99,762 105,764 110,772;b 110,772 153,772 156,762 158,740 172,740 174,728;o 174,728 187,728 190,734 193,742 248,742;b 248,742 250,728;o 250,728 254,745;b 257,742 259,715 262,706;o 262,708 272,700;b 275,695 276,718 278,692 280,730 282,694 294,694 297,678 299,686 312,686 314,658 316,676 334,676 337,664 343,664;o 343,664 345,722;b 345,722 347,674 394,674;o 394,674 396,686;b 396,686 398,644 400,680 402,688 403,648 406,672 407,640 430,640;o 430,640 435,660;b 435,660 436,638 443,636 446,620 448,620 450,605 461,605;o 461,605 465,632 467,682;b 468,680 469,634 471,660 473,604;o 474,607 486,607;b 486,604 503,604 504,594 506,612 508,598 521,598 524,587 583,587;o 583,587 585,604;b 585,604 586,574 605,574 610,560 623,558 626,545;o 626,545 637,545 639,555;b 640,555 641,528 642,536;o 642,536 669,536;b 669,536 671,530 674,515 688,515 690,488;o 690,490 698,490;b 698,490 702,472 704,460;o 705,466 729,466;b 730,466 732,504 735,440 742,440 744,432;o 744,433 760,433;b 760,433 762,428 768,420 771,404 791,404 795,388;o 795,388 819,388;b 819,388 821,384 823,372;o 823,373 829,371;b 829,371 831,363;o 831,364 930,364 934,390;b 934,390 935,366 942,350 946,352 950,324;o 951,331 964,331;b 964,331 967,320 988,320 991,298;o 991,301 1004,299;b 1004,299 1006,272 1015,272;o 1015,272 1020,304 1022,330 1025,374;b 1025,374 1026,404 1028,330 1030,256 1044,254;o 1044,254 1047,290;b 1047,290 1050,242 1092,242 1093,252 1095,206;o 1097,230 1108,230 1113,242;b 1113,242 1115,214 1130,214 1132,196 1134,208 1137,190 1141,165;o 1142,170 1168,170;b 1168,180 1170,158;o 1171,170 1203,170;b 1203,170 1206,152;o 1207,154 1215,154;b 1215,154 1217,150 1219,178;o 1221,154 1243,154;b 1243,154 1245,174 1248,124;o 1249,128 1254,170;b 1255,172 1256,112 1258,136;o 1261,120 1268,118;b 1268,118 1271,98 1285,97 1287,104 1289,78;o 1289,80 1301,80;b 1301,80 1304,97 1306,68 1308,56;o 1308,56 1325,56`;
const runs = curve.split(';').map(r => ({ c: r[0], p: r.slice(2).split(' ').map(q => { const [x, y] = q.split(','); return [x * K, 160 + y / 3]; }) }));
{
  const pts = a => a.map(p => p[0].toFixed(1) + ',' + p[1].toFixed(1)).join(' ');
  const all = runs.flatMap(r => r.p);
  let s = rect(4.5, 161.5, 898, 324, 'url(#gPlot1)', AX) + line(5, 162, 5, 485, '#000', 2);
  s += `<polygon points="6,470 ${pts(all)} 812,470" fill="url(#gArea)"/>`;
  s += `<polyline points="${pts(all)}" fill="none" stroke="#88acf0" stroke-width="2"/>`;
  for (const r of runs) s += `<polyline points="${pts(r.p)}" fill="none" stroke="${r.c === 'b' ? '#6a9cee' : '#f4ac48'}" stroke-width="${r.c === 'b' ? 2 : 2.5}"/>`;
  s += line(5, 470.5, 902, 470.5, '#3838a8');
  for (let i = 0; i < 14; i++) { const y = Math.round(168 + i * 23.3) + .5; s += line(902, y, i % 2 ? 904 : 907, y); }
  ['140 000', '120 000', '100 000', '80 000', '60 000', '40 000', '20 000'].forEach((t, i) => s += text(909, Math.round(172 + i * 46.5), t, i === 2 ? 'b' : ''));
  s += rect(907.5, 170.5, 47, 16, '#e6f0ff', AX) + text(909, 183, '135 646', 'blue');
  document.getElementById('equity').innerHTML = s;
}

// Open positions: start, end and size.
const pos = '33 36 2,37 38 2,44 46 2,87 91 2,88 91 4,95 101 2,98 101 6,103 111 2,150 158 2,170 178 2,186 196 2,248 255 2,258 265 2,271 281 2,274 281 4,292 299 2,309 315 2,333 338 2,345 346 2,392 399 2,397 399 4,400 408 2,402 408 4,430 438 2,443 451 2,444 448 4,461 474 2,462 474 4,464 474 6,467 474 8,487 490 2,503 510 2,521 526 2,581 586 2,583 586 4,604 611 2,624 627 2,639 644 2,670 675 2,686 691 2,699 701 2,702 706 2,728 735 2,730 735 4,732 735 6,742 745 2,761 764 2,768 771 2,792 795 2,820 823 2,830 833 2,931 942 2,933 938 4,946 951 2,965 967 2,985 993 2,990 993 4,1001 1008 2,1016 1031 4,1019 1031 6,1024 1031 8,1026 1031 10,1045 1050 2,1093 1096 2,1094 1096 4,1111 1117 2,1130 1143 2,1166 1171 2,1204 1207 2,1215 1222 2,1243 1256 2,1245 1249 4,1254 1256 4,1258 1261 2,1267 1272 2,1285 1290 2,1302 1308 4';
{
  let s = rect(4.5, 488.5, 898, 205, 'url(#gPlot2)', AX);
  for (const b of pos.split(',')) { const [a, e, v] = b.split(' ').map(Number); const x = Math.round(a * K); s += rect(x, Math.round(685 - v * 18.7), Math.max(1, Math.round(e * K) - x), Math.round(v * 18.7), '#6099f8'); }
  s += line(5, 685.5, 902, 685.5, '#3838a8');
  for (let v = 0; v <= 10; v++) { const y = Math.round(685 - v * 18.7) + .5; s += line(902, y, v % 2 ? 904 : 907, y); if (v && v % 2 === 0) s += text(909, y + 3.5, v, v === 10 ? 'b' : ''); }
  s += rect(907.5, 677.5, 10, 16, '#e6f0ff', AX) + text(909, 690, '0', 'blue');
  document.getElementById('positions').innerHTML = s;
}

// Price history, drawn as one high-low stroke per step.
const price = ['7,845 10,820 14,808 18,792 21,800 24,785 28,790 32,778 35,812 38,790 41,800 44,777 47,768 50,745 53,742 56,755 60,765 63,735 64,722',
'64,910 68,920 72,900 78,890 82,893 86,878 90,872 93,890 97,868 101,862 105,872 109,866 113,880 118,888 122,900 126,912 130,885 135,875 140,873 145,890 149,862 152,858 155,860 158,885 161,885 165,900 170,910 175,905 180,915 184,908 188,912 192,930 196,915 200,905 205,898 209,912 213,930 217,900 221,925 223,978 226,955 229,925 233,945 237,940 241,970 245,990 248,1000 252,985 257,963 260,985 264,995 268,990 273,1000 277,985 281,965 285,975 289,985 293,970 297,953 302,940 307,943 311,950 315,935 319,938 323,922 326,935 329,952 332,970 336,945 341,955 346,925 350,915 354,905 358,918 362,905 367,900 371,915 375,905 380,920 385,903 389,905 392,918 396,903 400,895 404,905 408,898 412,895 416,905 419,915 423,920 427,905 432,900 437,895 442,900 448,920 452,905 457,900 462,895 467,880 472,872 480,868 484,872 489,858 492,865 496,845 502,852 508,845 515,865 520,850 526,848 531,840 536,830 540,828 543,805 547,792 550,785 552,772 554,790 557,815 560,832 563,805 567,800 571,820 575,805 579,815 582,795 586,798 592,800 597,792 600,775 604,790 609,795 613,790 616,800 619,770 623,780 627,800 631,785 635,765 638,775 642,795 646,780 651,770 655,795 659,822 663,795 668,785 673,775 676,800 681,815 685,800 689,800 693,830 697,825 700,798 704,790 708,805 711,795 715,810 720,800 724,795 727,815 731,795 735,785 739,770 743,780 747,775 750,790 753,785 756,730 759,728 763,740 767,735 771,745 775,740 779,755 782,780 783,810 787,815 791,800 795,790 798,800 802,780 806,775 810,770 812,765'];
const crosses = '61,722 55,735 28,764 22,779 25,783 68,904 95,874 97,864 106,864 108,850 119,881 155,850 162,872 172,895 182,900 192,915 207,889 244,967 249,978 267,974 275,970 273,980 289,961 299,938 311,934 321,915 360,901 373,898 384,902 393,896 412,885 422,897 430,888 449,889 456,891 468,869 472,862 486,847 503,834 510,832 576,790 574,796 583,795 592,788 607,780 616,771 631,777 643,765 670,772 683,792 695,807 699,797 716,792 738,760 748,769 764,719 772,732 769,732 778,742 789,792 800,770';
const arrows = '20,817 24,808 27,804 58,769 53,773 60,779 63,926 95,902 92,905 105,888 104,883 114,899 152,878 158,916 168,926 166,922 179,933 189,945 204,925 211,994 240,1000 243,995 263,1000 282,983 284,987 286,996 298,965 308,962 319,953 357,934 356,931 370,932 382,935 391,934 410,920 420,949 428,919 430,918 448,928 446,919 454,920 466,897 470,896 485,881 502,865 508,860 570,818 571,830 574,825 579,832 591,815 603,808 606,811 613,810 622,794 628,816 627,812 624,806 640,803 670,799 669,813 680,828 692,845 696,846 714,824 737,795 744,795 762,751 765,751 762,766 768,767 776,780 787,835 797,811';
const topText = [[121,'0'],[130,'0'],[143,'5'],[155,'062,5'],[188,')'],[196,'0'],[206,'5'],[215,'5'],[226,',0'],[244,'677,5'],[276,')6,0'],[300,')'],[311,',0'],[323,'0'],[332,',0'],[344,'0'],[359,'441,8'],[392,'-,1'],[408,'5'],[417,'5'],[426,'6,9'],[446,'27'],[464,'4,2'],[481,'6,3'],[507,',07,5'],[536,'l'],[545,'4@5 789,6'],[609,')'],[616,'0'],[625,'3,0'],[642,'0'],[651,'4,0'],[668,'5'],[678,'77,5'],[703,',5'],[716,',5'],[731,'0,0'],[748,'22,5'],[772,'5'],[780,'0,5'],[797,'5'],[805,'5'],[813,'0'],[824,'0']];
const botText = [[4,'95 833,6'],[60,'96,9'],[94,'742,0'],[126,'0,0'],[152,'047,5'],[186,')5'],[203,'0'],[213,'5'],[223,',0'],[240,'606,0'],[278,'0,0'],[296,'5'],[307,'5'],[318,',0'],[332,'0'],[343,'5'],[356,'426,1'],[391,',7'],[403,',8'],[415,'5'],[424,'8,2'],[444,'2'],[453,'3'],[463,'2,0'],[482,'4,9'],[505,',4'],[517,'6,2'],[535,')'],[541,'2@5 840,2'],[604,'3'],[611,',5'],[624,',0'],[639,'0'],[649,'0'],[660,',0'],[674,'62,0'],[704,'5'],[713,',5'],[728,'6,0'],[746,'15,5'],[770,')'],[776,'5,5'],[802,')'],[811,'5']];
{
  let seed = 7; const rnd = () => (seed = (seed * 16807) % 2147483647) / 2147483647;
  let s = rect(4.5, 697.5, 898, 324, 'url(#gPlot3)', AX);
  s += line(211.5, 915, 211.5, 988, '#50c060') + line(223.5, 920, 223.5, 987, '#8a9a60') + line(420.5, 900, 420.5, 938, '#50c060') + line(693.5, 810, 693.5, 838, '#d06868');
  for (const seg of price) {
    const p = seg.split(' ').map(q => q.split(',').map(Number));
    for (let i = 0; i < p.length - 1; i++) {
      const [x0, y0] = p[i], [x1, y1] = p[i + 1];
      for (let x = x0; x < x1; x++) {
        const t = (x - x0) / (x1 - x0), y = y0 + (y1 - y0) * t + (rnd() - .5) * 8, h = 2 + rnd() * 8, up = rnd() < (y1 < y0 ? .7 : .35);
        s += line(x + .5, (y - h).toFixed(1), x + .5, Math.min(1003, y + h).toFixed(1), up ? '#58c660' : '#cc6e72');
      }
    }
  }
  const G = '#40a848';
  s += line(5, 785, 902, 785, '#28b030', 2) + line(86, 836.5, 902, 836.5, G) + line(55, 909.5, 902, 909.5, G, 3) + line(321, 973.5, 902, 973.5, G, 3) + line(573, 877.5, 902, 877.5, G, 3) + line(644, 939.5, 902, 939.5, G, 3) + line(807, 862.5, 902, 862.5, G);
  for (const [x, y, d] of [[802, 871.5, '20 8'], [769, 892.5, '20 8'], [782, 902.5, '4 4'], [752, 948.5, '4 4'], [552, 989.5, '20 8']]) s += line(x, y, 902, y, G, 1, `stroke-dasharray="${d}"`);
  for (const a of arrows.split(' ')) { const [x, y] = a.split(','); s += `<path transform="translate(${x} ${y})" d="M0-6l5 6H2.500v6h-5V0H-5z" fill="url(#gArrow)" stroke="#1c4cb0"/>`; }
  for (const a of crosses.split(' ')) { const [x, y] = a.split(','); s += `<path transform="translate(${x} ${y})" d="M-3-5L0-3.500 3-5 5-3 3.500 0 5 3 3 5 0 3.500-3 5-5 3-3.500 0-5-3z" fill="#ffa830" stroke="#c87810" stroke-linejoin="round"/>`; }
  s += rect(208.5, 924.5, 8, 10, '#ffa830', '#c87810') + rect(205.5, 933.5, 12, 6, '#ffa830', '#c87810');
  s += rect(121, 698, 712, 17, '#f4e4c2');
  for (const [x] of topText) s += line(x - 1.5, 698, x - 1.5, 715, '#f8d48c');
  for (const [x, t] of topText) s += text(x, 711, t);
  s += rect(5, 1003.5, 818, 17, '#c8dcfc', '#7aa8f4');
  for (const x of [53,56,60,86,91,96,125,129,137,138,148,185,191,200,211,222,237,273,276,277,279,297,303,313,316,317,329,342,351,390,403,414,423,443,452,462,479,481,482,499,503,517,535,540,604,606,611,621,636,647,658,661,673,702,713,726,730,746,770,777,794,797,800,804,817,822]) s += line(x + .5, 1004, x + .5, 1021, '#6a9ef4');
  for (const [x, t] of botText) s += text(x, 1017, t);
  s += text(6, 1019, '© IT-Finance.com <tspan class="em">Données indicatives</tspan>', 'tag');
  [710, 751, 791, 831, 871, 911, 951, 991].forEach((y, i) => { s += line(902, y + .5, 907, y + .5); s += text(909, y + 4, ['7 000', '6 500', '6 000', '5 500', '5 000', '', '4 000', ''][i], i === 4 ? 'b' : ''); });
  for (const [y, t] of [[785, 'Mensuel'], [836, 'Mensuel'], [877, 'Mensuel'], [909, 'Mensuel'], [939, 'Mensuel'], [973, 'Mensuel'], [989, 'Hebdo']]) s += line(902, y + .5, 907, y + .5) + rect(907.5, y - 7.5, t === 'Hebdo' ? 34 : 43, 15, 'url(#gTag)', AX) + text(909, y + 4, t, 'tag');
  s += rect(907.5, 761.5, 44, 16, '#f4c820', '#8a8040') + text(909, 774, '6 275,0');
  [80, 154, 228, 302, 376, 450, 524, 581, 644, 718, 793, 869].forEach((x, i) => s += line(x + .5, 1022, x + .5, 1026) + text(x, 1039, 2007 + i, 'mid'));
  document.getElementById('price').innerHTML = s;
}

// Gross performance per year.
{
  const tops = [700, 939, 861, 864, 913, 771, 856, 960, 797, 860, 825, 950];
  let s = rect(1144, 990, 697, 15, '#ccd9f0');
  for (let i = 1; i <= 12; i++) { const y = Math.round(990 - i * 25.28) + .5; s += line(1144, y, 1841, y, i % 5 ? '#c0cfd6' : '#aebfc7'); }
  tops.forEach((_, i) => s += line(1174.5 + 58 * i, 685, 1174.5 + 58 * i, 1005, '#c0cfd6'));
  s += `<rect x="1143.500" y="684.500" width="697" height="321" fill="none" stroke="${AX}"/>`;
  s += line(1144, 990.5, 1840, 990.5, '#3838a8');
  tops.forEach((y, i) => s += rect(1165.5 + 58 * i, y + .5, 18, 990 - y, 'url(#gBar)', '#188a24') + line(1173.5 + 58 * i, 1006, 1173.5 + 58 * i, 1010) + text(1173 + 58 * i, 1023, 2006 + i, 'mid'));
  for (let i = 0; i < 25; i++) { const y = Math.round(990 - i * 12.64) + .5; s += line(1841, y, i % 2 ? 1843 : 1845, y); }
  ['0', '2 000', '4 000', '6 000', '8 000', '10 000', '12 000', '14 000', '16 000', '18 000', '20 000', '22 000', '24 000'].forEach((t, i) => s += text(1847, Math.round((i === 12 ? 997 : 994) - i * 25.2), t, i % 5 ? '' : 'b'));
  document.getElementById('perf').innerHTML = s;
}
```
